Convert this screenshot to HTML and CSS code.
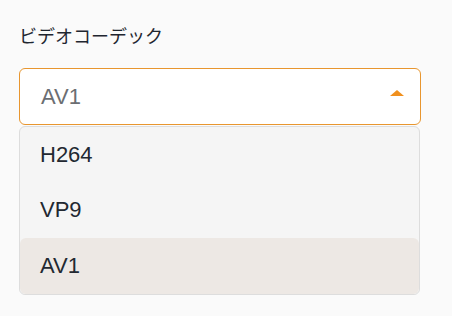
FILE: index.html
```html
<!DOCTYPE html>
<html lang="ja">
<head>
<meta charset="utf-8">
<link rel="stylesheet" href="styles.css">
</head>
<body>
<div class="field">
  <div class="label">ビデオコーデック</div>
  <div class="select">
    <span class="value">AV1</span>
    <svg class="arrow" width="14" height="6" viewBox="0 0 14 6"><path d="M0 6 L7 0 L14 6 Z" fill="#f0901e"/></svg>
  </div>
  <ul class="menu">
    <li class="item">H264</li>
    <li class="item">VP9</li>
    <li class="item active">AV1</li>
  </ul>
</div>
</body>
</html>
```

FILE: styles.css
```css
html, body {
  margin: 0;
  padding: 0;
  background: #fafafa;
}
body {
  font-family: "Liberation Sans", "Noto Sans CJK JP", sans-serif;
}
.field {
  padding: 23px 31px 0 19px;
}
.label {
  font-family: "Noto Sans CJK JP", sans-serif;
  font-size: 18px;
  line-height: 24px;
  color: #1f2630;
}
.select {
  margin-top: 21px;
  height: 55px;
  border: 1px solid #e8962f;
  border-radius: 6px;
  background: #ffffff;
  display: flex;
  align-items: center;
  justify-content: space-between;
  padding: 0 16px 0 21px;
}
.value {
  font-size: 22px;
  color: #6b6e72;
}
.arrow {
  display: block;
  margin-top: -8px;
}
.menu {
  list-style: none;
  margin: 1px 1px 0 0;
  padding: 0;
  border: 1px solid #dddddd;
  border-radius: 6px;
  background: #f5f5f5;
}
.item {
  height: 55.5px;
  display: flex;
  align-items: center;
  padding-left: 20px;
  font-size: 22px;
  color: #222831;
  border-radius: 6px;
}
.item.active {
  background: #ede8e4;
}
```
